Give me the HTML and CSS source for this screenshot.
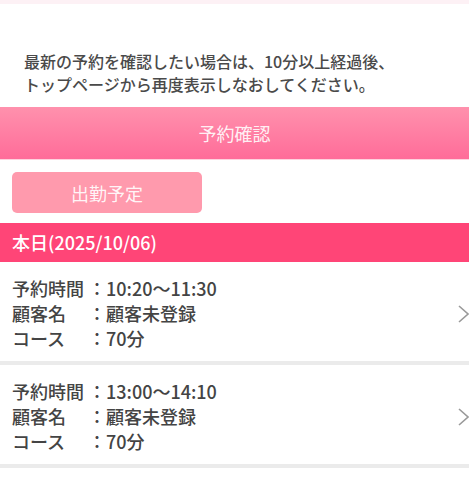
FILE: index.html
```html
<!DOCTYPE html>
<html lang="ja">
  <head>
    <meta charset="UTF-8" />
    <meta name="viewport" content="width=device-width, initial-scale=1.0" />
    <title>予約確認</title>
    <link rel="stylesheet" href="styles.css">
  </head>
  <body>
    <div class="top-strip"></div>

    <p class="notice">
      最新の予約を確認したい場合は、10分以上経過後、<br />
      トップページから再度表示しなおしてください。
    </p>

    <div class="title-bar">予約確認</div>

    <div class="actions">
      <button class="btn-shift">出勤予定</button>
    </div>

    <div class="day-header">本日(2025/10/06)</div>

    <ul class="reserve-list">
      <li class="reserve-item">
        <div class="reserve-info">
          <span class="label">予約時間</span><span class="colon">：</span><span class="value">10:20〜11:30</span>
          <span class="label">顧客名</span><span class="colon">：</span><span class="value">顧客未登録</span>
          <span class="label">コース</span><span class="colon">：</span><span class="value">70分</span>
        </div>
        <svg class="chevron" width="12" height="20" viewBox="0 0 12 20">
          <polyline points="2,2 11,10 2,18" fill="none" stroke="#9a9a9a" stroke-width="1.6" />
        </svg>
      </li>
      <li class="reserve-item">
        <div class="reserve-info">
          <span class="label">予約時間</span><span class="colon">：</span><span class="value">13:00〜14:10</span>
          <span class="label">顧客名</span><span class="colon">：</span><span class="value">顧客未登録</span>
          <span class="label">コース</span><span class="colon">：</span><span class="value">70分</span>
        </div>
        <svg class="chevron" width="12" height="20" viewBox="0 0 12 20">
          <polyline points="2,2 11,10 2,18" fill="none" stroke="#9a9a9a" stroke-width="1.6" />
        </svg>
      </li>
    </ul>
  </body>
</html>
```

FILE: styles.css
```css
body {
  margin: 0;
  padding: 0;
  background: #fff;
  font-family: "Noto Sans CJK JP", sans-serif;
  color: #444;
}
.top-strip {
  height: 4px;
  background: #fdf1f5;
}
.notice {
  margin: 0;
  padding: 46px 24px 11px;
  font-size: 16px;
  line-height: 23px;
  font-weight: 500;
  color: #4a4a4a;
}
.title-bar {
  height: 52px;
  line-height: 52px;
  text-align: center;
  font-size: 18px;
  color: rgba(255, 255, 255, 0.9);
  background: linear-gradient(#ff91ad, #ff6c99);
  border-bottom: 1px solid #ffd3de;
}
.actions {
  padding: 12px 12px 10px;
}
.btn-shift {
  width: 190px;
  height: 41px;
  border: none;
  border-radius: 5px;
  background: #ff9aad;
  color: rgba(255, 255, 255, 0.92);
  font-family: inherit;
  font-size: 18px;
  padding: 0;
}
.day-header {
  height: 39px;
  line-height: 39px;
  padding: 0 12px;
  background: #ff4577;
  color: #fff;
  font-size: 18px;
  font-weight: 500;
}
.reserve-list {
  list-style: none;
  margin: 0;
  padding: 0;
}
.reserve-item {
  display: flex;
  align-items: center;
  justify-content: space-between;
  padding: 14px 0 10px 12px;
  border-bottom: 4px solid #ebebeb;
}
.reserve-info {
  display: grid;
  grid-template-columns: 76px 18px auto;
  font-size: 18px;
  line-height: 25px;
  font-weight: 500;
  color: #444;
}
.chevron {
  display: block;
}
```
